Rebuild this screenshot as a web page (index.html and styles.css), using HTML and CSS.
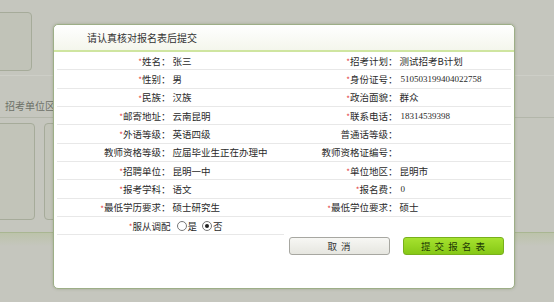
FILE: index.html
```html
<!DOCTYPE html>
<html lang="zh-CN">
<head>
  <meta charset="UTF-8" />
  <title>报名表确认</title>
  <link rel="stylesheet" href="styles.css">
</head>
<body>

  <!-- Page behind the dialog -->
  <div class="page">
    <div class="top-area">
      <div class="top-card"></div>
    </div>
    <div class="section-head">招考单位区域</div>
    <div class="card-row">
      <div class="unit-card first"></div>
      <div class="unit-card"></div>
    </div>
    <div class="green-band"></div>
  </div>

  <!-- Confirm dialog -->
  <div class="dialog">
    <div class="dialog-title">请认真核对报名表后提交</div>
    <div class="info-grid">
      <div class="label"><span class="req">*</span>姓名：</div>
      <div class="value">张三</div>
      <div class="label"><span class="req">*</span>招考计划：</div>
      <div class="value">测试招考B计划</div>

      <div class="label"><span class="req">*</span>性别：</div>
      <div class="value">男</div>
      <div class="label"><span class="req">*</span>身份证号：</div>
      <div class="value num">510503199404022758</div>

      <div class="label"><span class="req">*</span>民族：</div>
      <div class="value">汉族</div>
      <div class="label"><span class="req">*</span>政治面貌：</div>
      <div class="value">群众</div>

      <div class="label"><span class="req">*</span>邮寄地址：</div>
      <div class="value">云南昆明</div>
      <div class="label"><span class="req">*</span>联系电话：</div>
      <div class="value num">18314539398</div>

      <div class="label"><span class="req">*</span>外语等级：</div>
      <div class="value">英语四级</div>
      <div class="label">普通话等级：</div>
      <div class="value"></div>

      <div class="label">教师资格等级：</div>
      <div class="value">应届毕业生正在办理中</div>
      <div class="label">教师资格证编号：</div>
      <div class="value"></div>

      <div class="label"><span class="req">*</span>招聘单位：</div>
      <div class="value">昆明一中</div>
      <div class="label"><span class="req">*</span>单位地区：</div>
      <div class="value">昆明市</div>

      <div class="label"><span class="req">*</span>报考学科：</div>
      <div class="value">语文</div>
      <div class="label"><span class="req">*</span>报名费：</div>
      <div class="value num">0</div>

      <div class="label"><span class="req">*</span>最低学历要求：</div>
      <div class="value">硕士研究生</div>
      <div class="label"><span class="req">*</span>最低学位要求：</div>
      <div class="value">硕士</div>

      <div class="label"><span class="req">*</span>服从调配</div>
      <div class="value">
        <span class="radio"></span>是
        <span class="radio checked"></span>否
      </div>
      <div class="blank"></div>
      <div class="blank"></div>

      <div class="blank"></div>
      <div class="blank"></div>
      <div class="actions">
        <button class="btn cancel">取 消</button>
        <button class="btn submit">提 交 报 名 表</button>
      </div>
    </div>
  </div>

</body>
</html>
```

FILE: styles.css
```css
body {
  margin: 0;
  padding: 0;
  background-color: #c5c6be;
  font-family: "Noto Sans CJK SC", "Liberation Sans", sans-serif;
  color: #333;
  overflow: hidden;
}

/* background page */
.page {
  width: 554px;
  height: 302px;
}

.top-area {
  padding-top: 12px;
  height: 63px;
  border-bottom: 1px solid #cdcec7;
}

.top-card {
  margin-left: -10px;
  width: 40px;
  height: 57px;
  border: 1px solid #a6ab9a;
  border-radius: 4px;
  background-color: #c1c3b8;
}

.section-head {
  margin-top: 20px;
  padding: 2px 5px 4px;
  font-size: 10px;
  color: #6d7168;
  border-bottom: 1px solid #b3b6aa;
}

.card-row {
  display: flex;
  gap: 9px;
  margin-top: 5px;
  height: 97px;
}

.unit-card {
  width: 140px;
  border: 1px solid #a6ab9a;
  border-radius: 4px;
  background-color: #c2c4b9;
}

.unit-card.first {
  margin-left: -10px;
  width: 43px;
}

.green-band {
  margin-top: 12px;
  height: 13px;
  border-top: 1px solid #a9b692;
  background: linear-gradient(#bcc3aa, #c5c6be);
}

/* dialog */
.dialog {
  position: absolute;
  left: 53px;
  top: 24px;
  width: 460px;
  height: 263px;
  background-color: #fff;
  border: 1px solid #9dae87;
  border-radius: 5px;
  box-shadow: 0 0 3px rgba(90, 110, 60, 0.35);
}

.dialog-title {
  height: 25px;
  line-height: 25px;
  padding-left: 33px;
  font-size: 10px;
  color: #333;
  background: linear-gradient(#ffffff, #f4f6ec);
  border-bottom: 2px solid #cfe5a0;
  border-radius: 5px 5px 0 0;
}

.info-grid {
  display: grid;
  grid-template-columns: repeat(4, 1fr);
  grid-auto-rows: 18.33px;
  margin: 0 3px;
  font-size: 9.5px;
  color: #2a2a2a;
}

.label, .value {
  border-bottom: 1px solid #e8e8e8;
  display: flex;
  align-items: center;
  white-space: nowrap;
}

.label {
  justify-content: flex-end;
}

.value {
  padding-left: 2px;
  gap: 1px;
}

.value.num {
  font-family: "Liberation Serif", serif;
  font-size: 9px;
  padding-left: 3px;
}

.req {
  color: #e23b3b;
  font-size: 8px;
  align-self: flex-start;
  margin-top: 4px;
}

.radio {
  display: inline-block;
  width: 8px;
  height: 8px;
  border: 1px solid #777;
  border-radius: 50%;
  background: #fff;
  margin-left: 4px;
  position: relative;
}

.radio.checked::after {
  content: "";
  position: absolute;
  left: 2px;
  top: 2px;
  width: 4px;
  height: 4px;
  border-radius: 50%;
  background: #222;
}

.actions {
  grid-column: 3 / 5;
  display: flex;
  justify-content: space-between;
  padding: 2px 7px 0 5px;
}

.btn {
  width: 101px;
  height: 18px;
  padding: 0;
  border-radius: 3px;
  font-family: "Noto Sans CJK SC", sans-serif;
  font-size: 9.5px;
  white-space: nowrap;
  letter-spacing: 1px;
  cursor: pointer;
}

.btn.cancel {
  background: linear-gradient(#f7f7f4, #e6e6e0);
  border: 1px solid #a7a7a1;
  color: #333;
}

.btn.submit {
  background: linear-gradient(#a6e22f, #86c816);
  border: 1px solid #78b01c;
  color: #1e3a05;
}
```
